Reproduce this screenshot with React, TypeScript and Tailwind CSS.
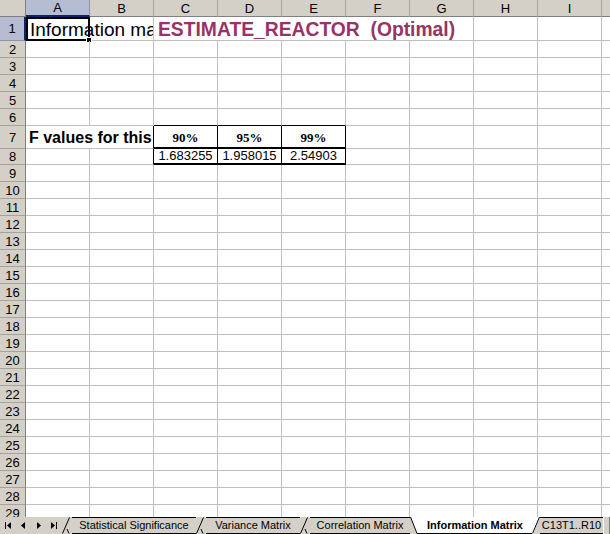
import React from "react";

const GRID = "border-[#c0c0c0]";
const ROW_HEIGHTS = [24, 17, 17, 17, 17, 17, 23, 16, ...Array(21).fill(17)];
const COLS = ["A", "B", "C", "D", "E", "F", "G", "H", "I", "J"];

function Cell({ w = 64, className = "", children }: { w?: number; className?: string; children?: React.ReactNode }) {
  return (
    <div
      className={`shrink-0 overflow-hidden border-r border-b ${GRID} ${className}`}
      style={{ width: w }}
    >
      {children}
    </div>
  );
}

function RowHeader({ n, active }: { n: number; active?: boolean }) {
  return (
    <div
      className={`flex w-[26px] shrink-0 items-center justify-center border-b text-[13px] leading-none text-black ${
        active
          ? "border-r-2 border-r-[#0a246a] border-b-[#8d93a8] bg-[#b6bdd2]"
          : "border-r border-r-[#808080] border-b-[#a6a39b] bg-[#d4d0c8]"
      }`}
    >
      {n}
    </div>
  );
}

function rowCells(r: number) {
  const plain = (cols: string[]) => cols.map((c) => <Cell key={c} />);
  if (r === 1) {
    return (
      <>
        <Cell w={128} className="flex items-end pb-[1px] pl-[4px]">
          <span className="whitespace-nowrap text-[19px] leading-none">Information ma</span>
        </Cell>
        <Cell w={320} className="flex items-end pb-[1px] pl-[4px]">
          <span className="whitespace-nowrap text-[19.3px] font-bold leading-none text-[#993366]">
            ESTIMATE_REACTOR&nbsp; (Optimal)
          </span>
        </Cell>
        {plain(["H", "I", "J"])}
      </>
    );
  }
  if (r === 6) {
    return (
      <>
        {plain(["A", "B"])}
        {["C", "D", "E"].map((c) => (
          <Cell key={c} className="border-b-black" />
        ))}
        {plain(["F", "G", "H", "I", "J"])}
      </>
    );
  }
  if (r === 7) {
    return (
      <>
        <Cell w={128} className="flex items-center border-r-black pl-[3px] pt-[2px]">
          <span className="whitespace-nowrap text-[16px] font-bold leading-none">F values for this</span>
        </Cell>
        {["90%", "95%", "99%"].map((t) => (
          <Cell
            key={t}
            className="flex items-center justify-center border-r-black border-b-2 border-b-black pt-[2px] font-['Liberation_Serif',serif] text-[13px] font-bold leading-none"
          >
            {t}
          </Cell>
        ))}
        {plain(["F", "G", "H", "I", "J"])}
      </>
    );
  }
  if (r === 8) {
    return (
      <>
        <Cell />
        <Cell className="border-r-black" />
        {["1.683255", "1.958015", "2.54903"].map((t) => (
          <Cell
            key={t}
            className="flex items-end justify-center border-r-black border-b-2 border-b-black pb-[1px] text-[13px] leading-none"
          >
            {t}
          </Cell>
        ))}
        {plain(["F", "G", "H", "I", "J"])}
      </>
    );
  }
  return plain(COLS);
}

function NavButtons() {
  return (
    <div className="flex w-[62px] shrink-0 items-center">
      <svg width="62" height="17" viewBox="0 0 62 17">
        <rect x="5" y="5" width="1" height="7" fill="#000" />
        <path d="M11 5 L7 8.5 L11 12 Z" fill="#000" />
        <path d="M25 5 L21 8.5 L25 12 Z" fill="#000" />
        <path d="M37 5 L41 8.5 L37 12 Z" fill="#000" />
        <path d="M51 5 L55 8.5 L51 12 Z" fill="#000" />
        <rect x="56" y="5" width="1" height="7" fill="#000" />
      </svg>
    </div>
  );
}

function Slant() {
  return (
    <svg width="10" height="17" viewBox="0 0 10 17" className="shrink-0">
      <path d="M0.5 16.5 L7.5 0.5" stroke="#000" strokeWidth="1" fill="none" />
      <path d="M5 12 L7 16.5" stroke="#000" strokeWidth="1" fill="none" />
    </svg>
  );
}

function Tab({ w, label, active }: { w: number; label: string; active?: boolean }) {
  return (
    <div
      className={`flex shrink-0 items-center justify-center border-b border-black text-[11px] leading-none ${
        active ? "bg-white font-bold" : "border-t border-t-black"
      }`}
      style={{ width: w }}
    >
      <span className="whitespace-nowrap">{label}</span>
    </div>
  );
}

export default function App() {
  return (
    <div className="flex h-[534px] w-[610px] flex-col overflow-hidden bg-white font-['Liberation_Sans',Arial,sans-serif] text-black">
      <div className="h-[517px] shrink-0 overflow-hidden">
        {/* column headers */}
        <div className="flex h-[17px]">
          <div className="w-[26px] shrink-0 border-r border-b border-[#808080] bg-[#d4d0c8]" />
          {COLS.map((c) => (
            <div
              key={c}
              className={`flex w-[64px] shrink-0 items-center justify-center border-r text-[13px] leading-none ${
                c === "A"
                  ? "border-b-2 border-b-[#0a246a] border-r-[#8d93a8] bg-[#b6bdd2]"
                  : "border-b border-b-[#808080] border-r-[#a6a39b] bg-[#d4d0c8]"
              }`}
            >
              {c === "J" ? "" : c}
            </div>
          ))}
        </div>
        {ROW_HEIGHTS.map((h, i) => {
          const r = i + 1;
          return (
            <div key={r} className="relative flex" style={{ height: h }}>
              <RowHeader n={r} active={r === 1} />
              {rowCells(r)}
              {r === 1 && (
                <div className="pointer-events-none absolute top-0 left-[26px] h-[24px] w-[64px] border-2 border-black">
                  <div className="absolute -right-[4px] -bottom-[4px] h-[6px] w-[6px] border border-white bg-black" />
                </div>
              )}
            </div>
          );
        })}
      </div>
      {/* sheet tabs */}
      <div className="flex h-[17px] shrink-0 bg-[#d4d0c8]">
        <NavButtons />
        <Slant />
        <Tab w={124} label="Statistical Significance" />
        <Slant />
        <Tab w={94} label="Variance Matrix" />
        <Slant />
        <Tab w={100} label="Correlation Matrix" />
        <svg width="8" height="17" viewBox="0 0 8 17" className="shrink-0">
          <path d="M0 0 L8 0 L8 17 L7 17 Z" fill="#fff" />
          <path d="M0.5 0 L7 16.5" stroke="#000" fill="none" />
          <path d="M7 16.5 L8 16.5" stroke="#000" fill="none" />
        </svg>
        <Tab w={114} label="Information Matrix" active />
        <svg width="8" height="17" viewBox="0 0 8 17" className="shrink-0">
          <path d="M0 0 L8 0 L1 17 L0 17 Z" fill="#fff" />
          <path d="M0.5 16.5 L7.5 0" stroke="#000" fill="none" />
        </svg>
        <Tab w={63} label="C13T1..R10" />
        <div className="flex-1 border-l border-l-white border-r border-r-[#808080] bg-[#d4d0c8]" />
      </div>
    </div>
  );
}
